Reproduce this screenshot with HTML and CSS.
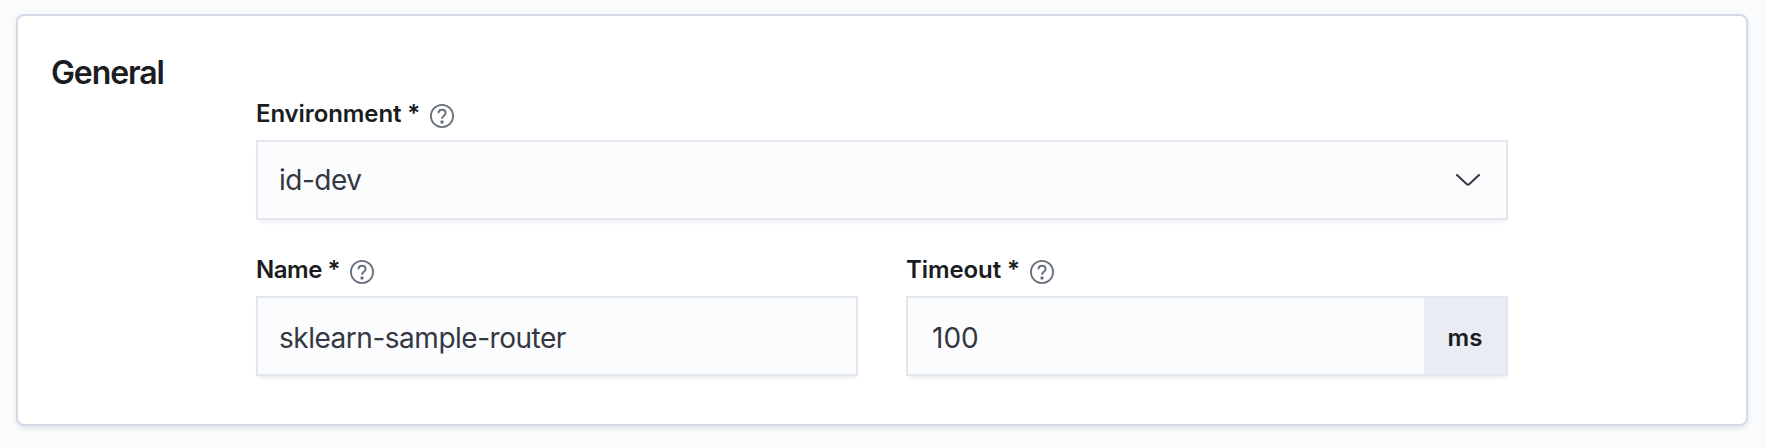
FILE: index.html
```html
<!DOCTYPE html>
<html lang="en">
<head>
<meta charset="utf-8">
<title>General</title>
<link rel="stylesheet" href="styles.css">
</head>
<body>
<svg class="defs" aria-hidden="true">
  <symbol id="help" viewBox="0 0 24 24">
    <circle cx="12" cy="12" r="11.1" fill="none" stroke="currentColor" stroke-width="1.8"/>
    <path d="M8.5 9.3C8.5 7.1 9.9 5.8 12 5.8s3.6 1.2 3.6 3.1c0 2.8-3.6 2.8-3.6 5.9" fill="none" stroke="currentColor" stroke-width="1.9"/>
    <circle cx="12" cy="18" r="1.7" fill="currentColor"/>
  </symbol>
</svg>
<main class="panel">
  <h2 class="title">General</h2>
  <form class="form">
    <div class="field field-wide">
      <div class="label"><span class="label-text">Environment *</span><svg class="help"><use href="#help"/></svg></div>
      <div class="control select"><span>id-dev</span>
        <svg class="arrow" viewBox="0 0 24 12"><path d="M1 1l9.9 9.2q1.1 1 2.2 0L23 1" fill="none" stroke="currentColor" stroke-width="2" stroke-linecap="round"/></svg>
      </div>
    </div>
    <div class="field">
      <div class="label"><span class="label-text name">Name *</span><svg class="help"><use href="#help"/></svg></div>
      <div class="control lower"><span>sklearn-sample-router</span></div>
    </div>
    <div class="field">
      <div class="label"><span class="label-text">Timeout *</span><svg class="help"><use href="#help"/></svg></div>
      <div class="control number"><span class="value">100</span><span class="unit">ms</span></div>
    </div>
  </form>
</main>
</body>
</html>
```
FILE: styles.css
```css
* { box-sizing: border-box; }
body {
  margin: 0;
  height: 448px;
  padding: 14px 16px 0;
  background: #fafbfd;
  font-family: Inter, sans-serif;
  color: #1a1c21;
}
.defs { display: block; width: 0; height: 0; }
.panel {
  width: 1732px;
  height: 412px;
  padding: 37px 32px 0 33px;
  background: #fff;
  border: 2px solid #d3dae6;
  border-radius: 8px;
  box-shadow: 0 2px 4px rgba(0, 0, 0, .07), 0 3px 12px rgba(0, 0, 0, .03);
}
.title {
  margin: 0;
  font-size: 32px;
  line-height: 40px;
  font-weight: 600;
  letter-spacing: -1.1px;
}
.form {
  width: 1252px;
  margin: 3px 0 0 205px;
  display: grid;
  grid-template-columns: 602px 602px;
  column-gap: 48px;
  row-gap: 32px;
}
.field-wide { grid-column: 1 / 3; }
.label {
  height: 44px;
  display: flex;
  align-items: flex-start;
  font-size: 24px;
  line-height: 36px;
  font-weight: 600;
}
.label-text { white-space: nowrap; letter-spacing: -.1px; }
.name { letter-spacing: -.45px; }
.help { width: 24px; height: 24px; margin: 8px 0 0 10px; color: #69707d; overflow: visible; }
.control {
  height: 80px;
  display: flex;
  align-items: center;
  justify-content: space-between;
  padding: 0 22px 0 21px;
  border: 2px solid #e3e6ef;
  background: #fbfcfd;
  box-shadow: 0 4px 4px -2px rgba(0, 0, 0, .08);
  color: #343741;
  font-size: 28px;
  letter-spacing: -.48px;
  line-height: 36px;
}
.arrow { width: 24px; height: 12px; margin-right: 4px; }
.lower { padding-top: 4px; }
.number { padding: 0 0 0 24px; }
.value { padding-top: 4px; letter-spacing: 0; }
.unit {
  width: 82px;
  padding-top: 3px;
  align-self: stretch;
  display: flex;
  align-items: center;
  justify-content: center;
  background: #e9edf3;
  color: #1a1c21;
  font-size: 24px;
  font-weight: 600;
  letter-spacing: 0;
}
```
